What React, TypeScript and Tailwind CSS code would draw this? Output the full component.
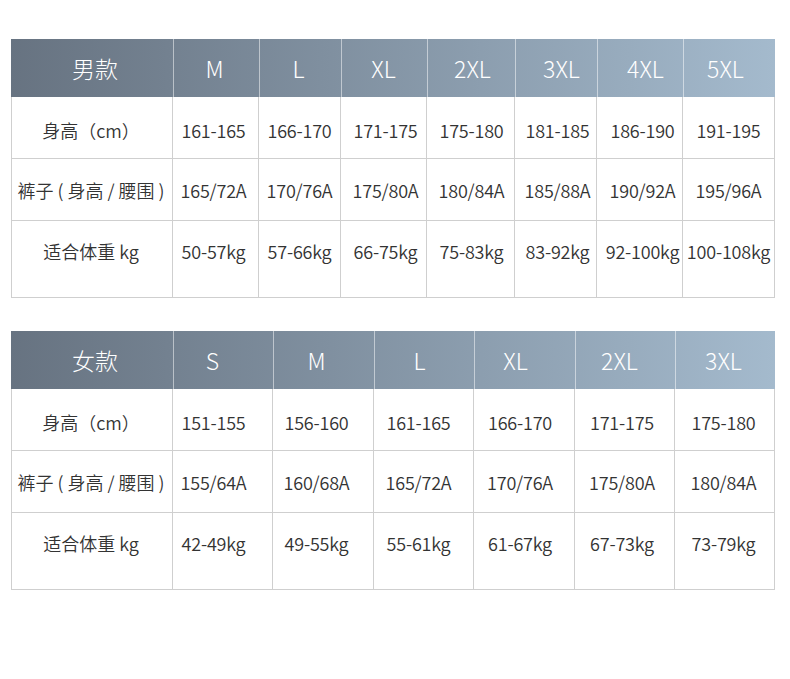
const men = {
  title: '男款',
  cols: 'grid-cols-[162px_86px_82px_86px_88px_82px_86px_92px]',
  headShift: ['pl-[6px]', 'pr-[4px]', 'pr-[4px]', 'pr-[2px]', 'pl-[2px]', 'pl-[10px]', 'pl-[10px]', 'pr-[8px]'],
  bodyShift: ['pr-[2px] tracking-normal', 'pr-[4px]', '', 'pl-[4px]', 'pl-[2px]', 'pl-[4px]', 'pl-[6px]', ''],
  sizes: ['M', 'L', 'XL', '2XL', '3XL', '4XL', '5XL'],
  rows: [
    ['身高（cm）', '161-165', '166-170', '171-175', '175-180', '181-185', '186-190', '191-195'],
    ['裤子 ( 身高 / 腰围 )', '165/72A', '170/76A', '175/80A', '180/84A', '185/88A', '190/92A', '195/96A'],
    ['适合体重 kg', '50-57kg', '57-66kg', '66-75kg', '75-83kg', '83-92kg', '92-100kg', '100-108kg'],
  ],
}

const women = {
  title: '女款',
  cols: 'grid-cols-[162px_100px_101px_100px_101px_100px_100px]',
  headShift: ['pl-[6px]', 'pr-[22px]', 'pr-[15px]', 'pr-[10px]', 'pr-[19px]', 'pr-[12px]', 'pr-[4px]'],
  bodyShift: ['pr-[2px] tracking-normal', 'pr-[18px]', 'pr-[13px]', 'pr-[10px]', 'pr-[8px]', 'pr-[5px]', 'pr-[2px]'],
  sizes: ['S', 'M', 'L', 'XL', '2XL', '3XL'],
  rows: [
    ['身高（cm）', '151-155', '156-160', '161-165', '166-170', '171-175', '175-180'],
    ['裤子 ( 身高 / 腰围 )', '155/64A', '160/68A', '165/72A', '170/76A', '175/80A', '180/84A'],
    ['适合体重 kg', '42-49kg', '49-55kg', '55-61kg', '61-67kg', '67-73kg', '73-79kg'],
  ],
}

const rowPads = ['h-[62px] pt-[21px]', 'h-[62px] pt-[19px]', 'h-[77px] pt-[18px]']

function SizeTable({ data }: { data: typeof men }) {
  return (
    <div className="w-[764px]">
      {/* Header */}
      <div className={`grid ${data.cols} h-[58px] bg-gradient-to-r from-[#677381] to-[#a4bacd] text-white text-[23px] font-light`}>
        <div className={`flex items-center justify-center ${data.headShift[0]}`}>{data.title}</div>
        {data.sizes.map((s, j) => (
          <div key={s} className={`flex items-center justify-center border-l border-white/50 ${data.headShift[j + 1]}`}>
            {s}
          </div>
        ))}
      </div>

      {/* Body */}
      {data.rows.map((row, i) => (
        <div key={i} className={`grid ${data.cols} text-[18px] text-[#333333] tracking-[-0.2px] font-[350]`}>
          {row.map((cell, j) => (
            <div
              key={j}
              className={`flex justify-center border-b border-r border-[#cfcfcf] whitespace-nowrap ${rowPads[i]} ${data.bodyShift[j]} ${j === 0 ? 'border-l' : ''}`}
            >
              {cell}
            </div>
          ))}
        </div>
      ))}
    </div>
  )
}

export default function App() {
  return (
    <div
      className="w-[790px] h-[679px] bg-white pl-[11px] pt-[39px] flex flex-col gap-[33px] leading-[24px]"
      style={{ fontFamily: '"Noto Sans CJK SC", "Noto Sans", sans-serif' }}
    >
      <SizeTable data={men} />
      <SizeTable data={women} />
    </div>
  )
}
